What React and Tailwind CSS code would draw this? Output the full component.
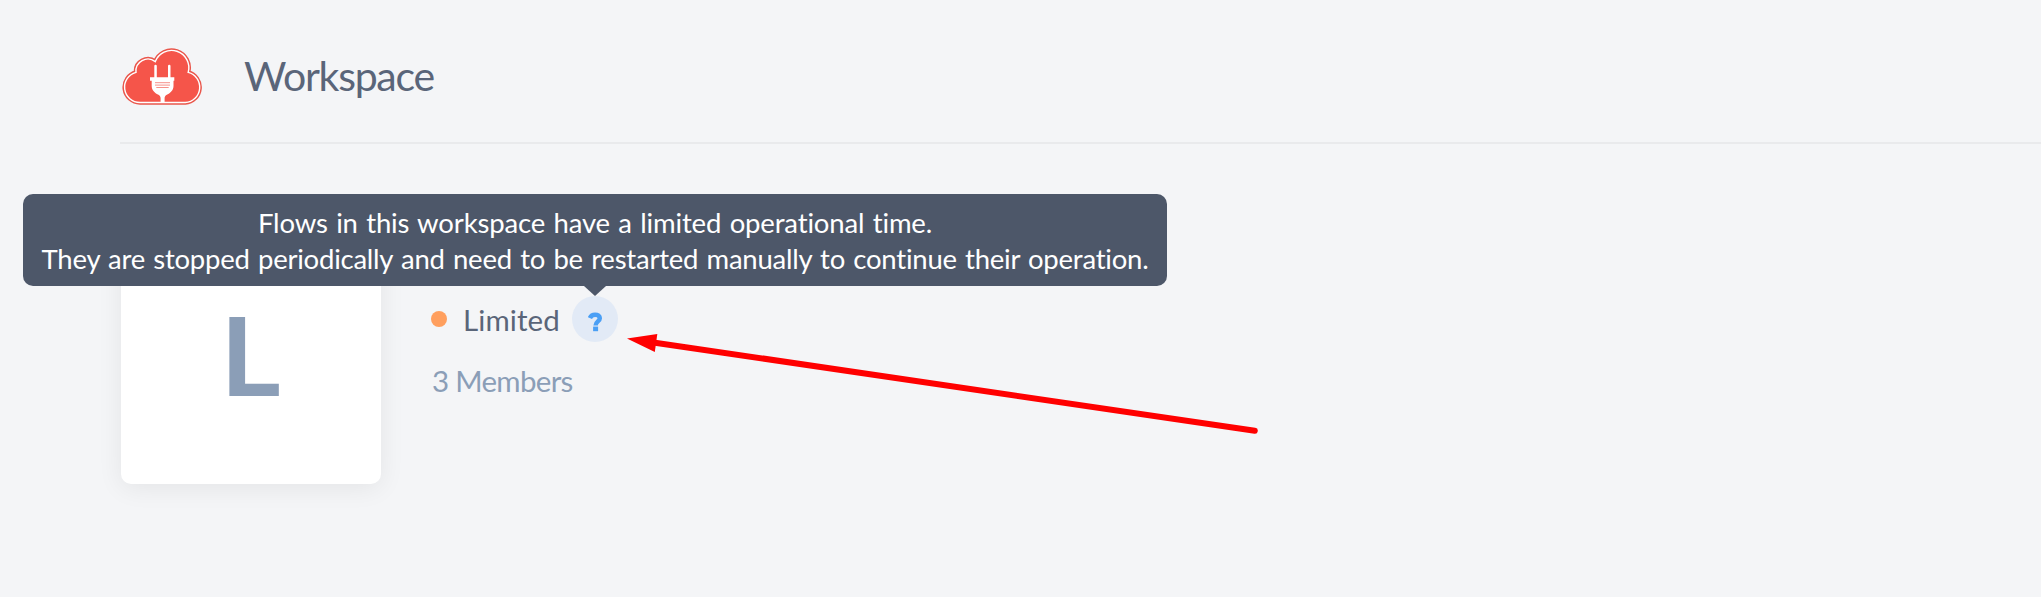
function CloudLogo() {
  const cloud =
    "M14 25.4A12 12 0 0 1 33.3 14.6A17.33 17.33 0 0 1 66.2 25.4A15.3 15.3 0 0 1 63.3 55.5H18A15.3 15.3 0 0 1 14 25.4Z";
  return (
    <svg className="h-[58px] w-[82px] shrink-0" viewBox="0 0 82 58" fill="none">
      <path d={cloud} fill="#f5554a" stroke="#e9564b" strokeWidth="4.3" />
      <path d={cloud} fill="#f5554a" stroke="#fff" strokeWidth="1.4" />
      <path
        d="M32.3 31V19a1.25 1.25 0 0 1 2.5 0v12zM46 31V19a1.25 1.25 0 0 1 2.5 0v12zM28 30.3h24.3v3.4h-.8v5.2c0 4.2-3.3 7-6.3 8.5-2 1-2.6 2-2.6 4V55.5h-4V51.4c0-2-.6-3-2.6-4-3-1.5-6.3-4.3-6.3-8.5v-5.2H28z"
        fill="#fff"
      />
      <path d="M33 35.7h15M33 38.1h15M34.3 40.5h12.4" stroke="#f5857d" strokeWidth="0.9" />
    </svg>
  );
}

function QuestionIcon() {
  return (
    <svg className="mt-[5px] ml-px h-5 w-[15px]" viewBox="0 0 15 20">
      <path d="M1.9 6.1C2.8 3.8 4.5 2.7 7 2.7c2.9 0 4.8 1.4 4.8 3.5 0 3.2-4.2 3.2-4.2 7.2" fill="none" stroke="#4a9ff5" strokeWidth="4.5" />
      <path d="M5.100 14.6h5v4.6h-5z" fill="#4a9ff5" />
    </svg>
  );
}

function Tooltip() {
  return (
    <div className="absolute bottom-[56px] left-1/2 z-10 flex h-[92px] w-[1144px] -translate-x-1/2 flex-col items-center rounded-[10px] bg-[#4d5769] pt-[11px] whitespace-nowrap text-white">
      <p className="text-[27.5px] leading-9 tracking-[-0.15px] [word-spacing:1.5px]">
        Flows in this workspace have a limited operational time.
      </p>
      <p className="text-[27.5px] leading-9 tracking-[-0.23px] [word-spacing:1.5px]">
        They are stopped periodically and need to be restarted manually to continue their operation.
      </p>
      <svg className="absolute top-[91px] left-1/2 h-[11px] w-[22px] -translate-x-1/2" viewBox="0 0 22 11">
        <path d="M0 0h22v1L11 11 0 1z" fill="#4d5769" />
      </svg>
    </div>
  );
}

export default function App() {
  return (
    <div className="relative h-[597px] w-full overflow-hidden bg-[#f4f5f7] pl-[120px] font-['Lato',sans-serif]">
      <header className="flex h-[144px] items-start border-b-2 border-[#e9eaec] pt-[47px] pl-[2px]">
        <CloudLogo />
        <h1 className="mt-1 ml-10 text-[41px] leading-[50px] tracking-[-1.25px] text-[#5a6579]">Workspace</h1>
      </header>
      <main className="flex pt-20 pl-px">
        <div className="h-[260px] w-[260px] rounded-[10px] bg-white pt-16 pl-[99px] text-[109px] leading-[132px] font-bold text-[#8b9eb7] shadow-[0_4px_26px_rgba(0,0,0,0.07)]">
          <span className="inline-block origin-left scale-x-[1.07]">L</span>
        </div>
        <div className="ml-[50px] pt-[72px]">
          <div className="flex h-[46px] items-center">
            <span className="h-4 w-4 rounded-full bg-[#ff9f5e]" />
            <span className="mt-[2px] ml-4 w-[109px] text-[29.5px] leading-9 tracking-[0.1px] text-[#5a6579]">Limited</span>
            <span className="relative flex h-[46px] w-[46px] items-center justify-center rounded-full bg-[#e2eaf6]">
              <QuestionIcon />
              <Tooltip />
            </span>
          </div>
          <p className="mt-[21px] pl-px text-[29.5px] leading-9 tracking-[-0.7px] text-[#8b9eb7]">3 Members</p>
        </div>
      </main>
      <svg className="absolute top-[330px] left-[620px] h-[110px] w-[645px]" viewBox="620 330 645 110">
        <path d="M655 342.7L1254.8 430.7" stroke="#f00" strokeWidth="6" strokeLinecap="round" />
        <path d="M627 338.5L657.3 334L654.8 352z" fill="#f00" />
      </svg>
    </div>
  );
}
